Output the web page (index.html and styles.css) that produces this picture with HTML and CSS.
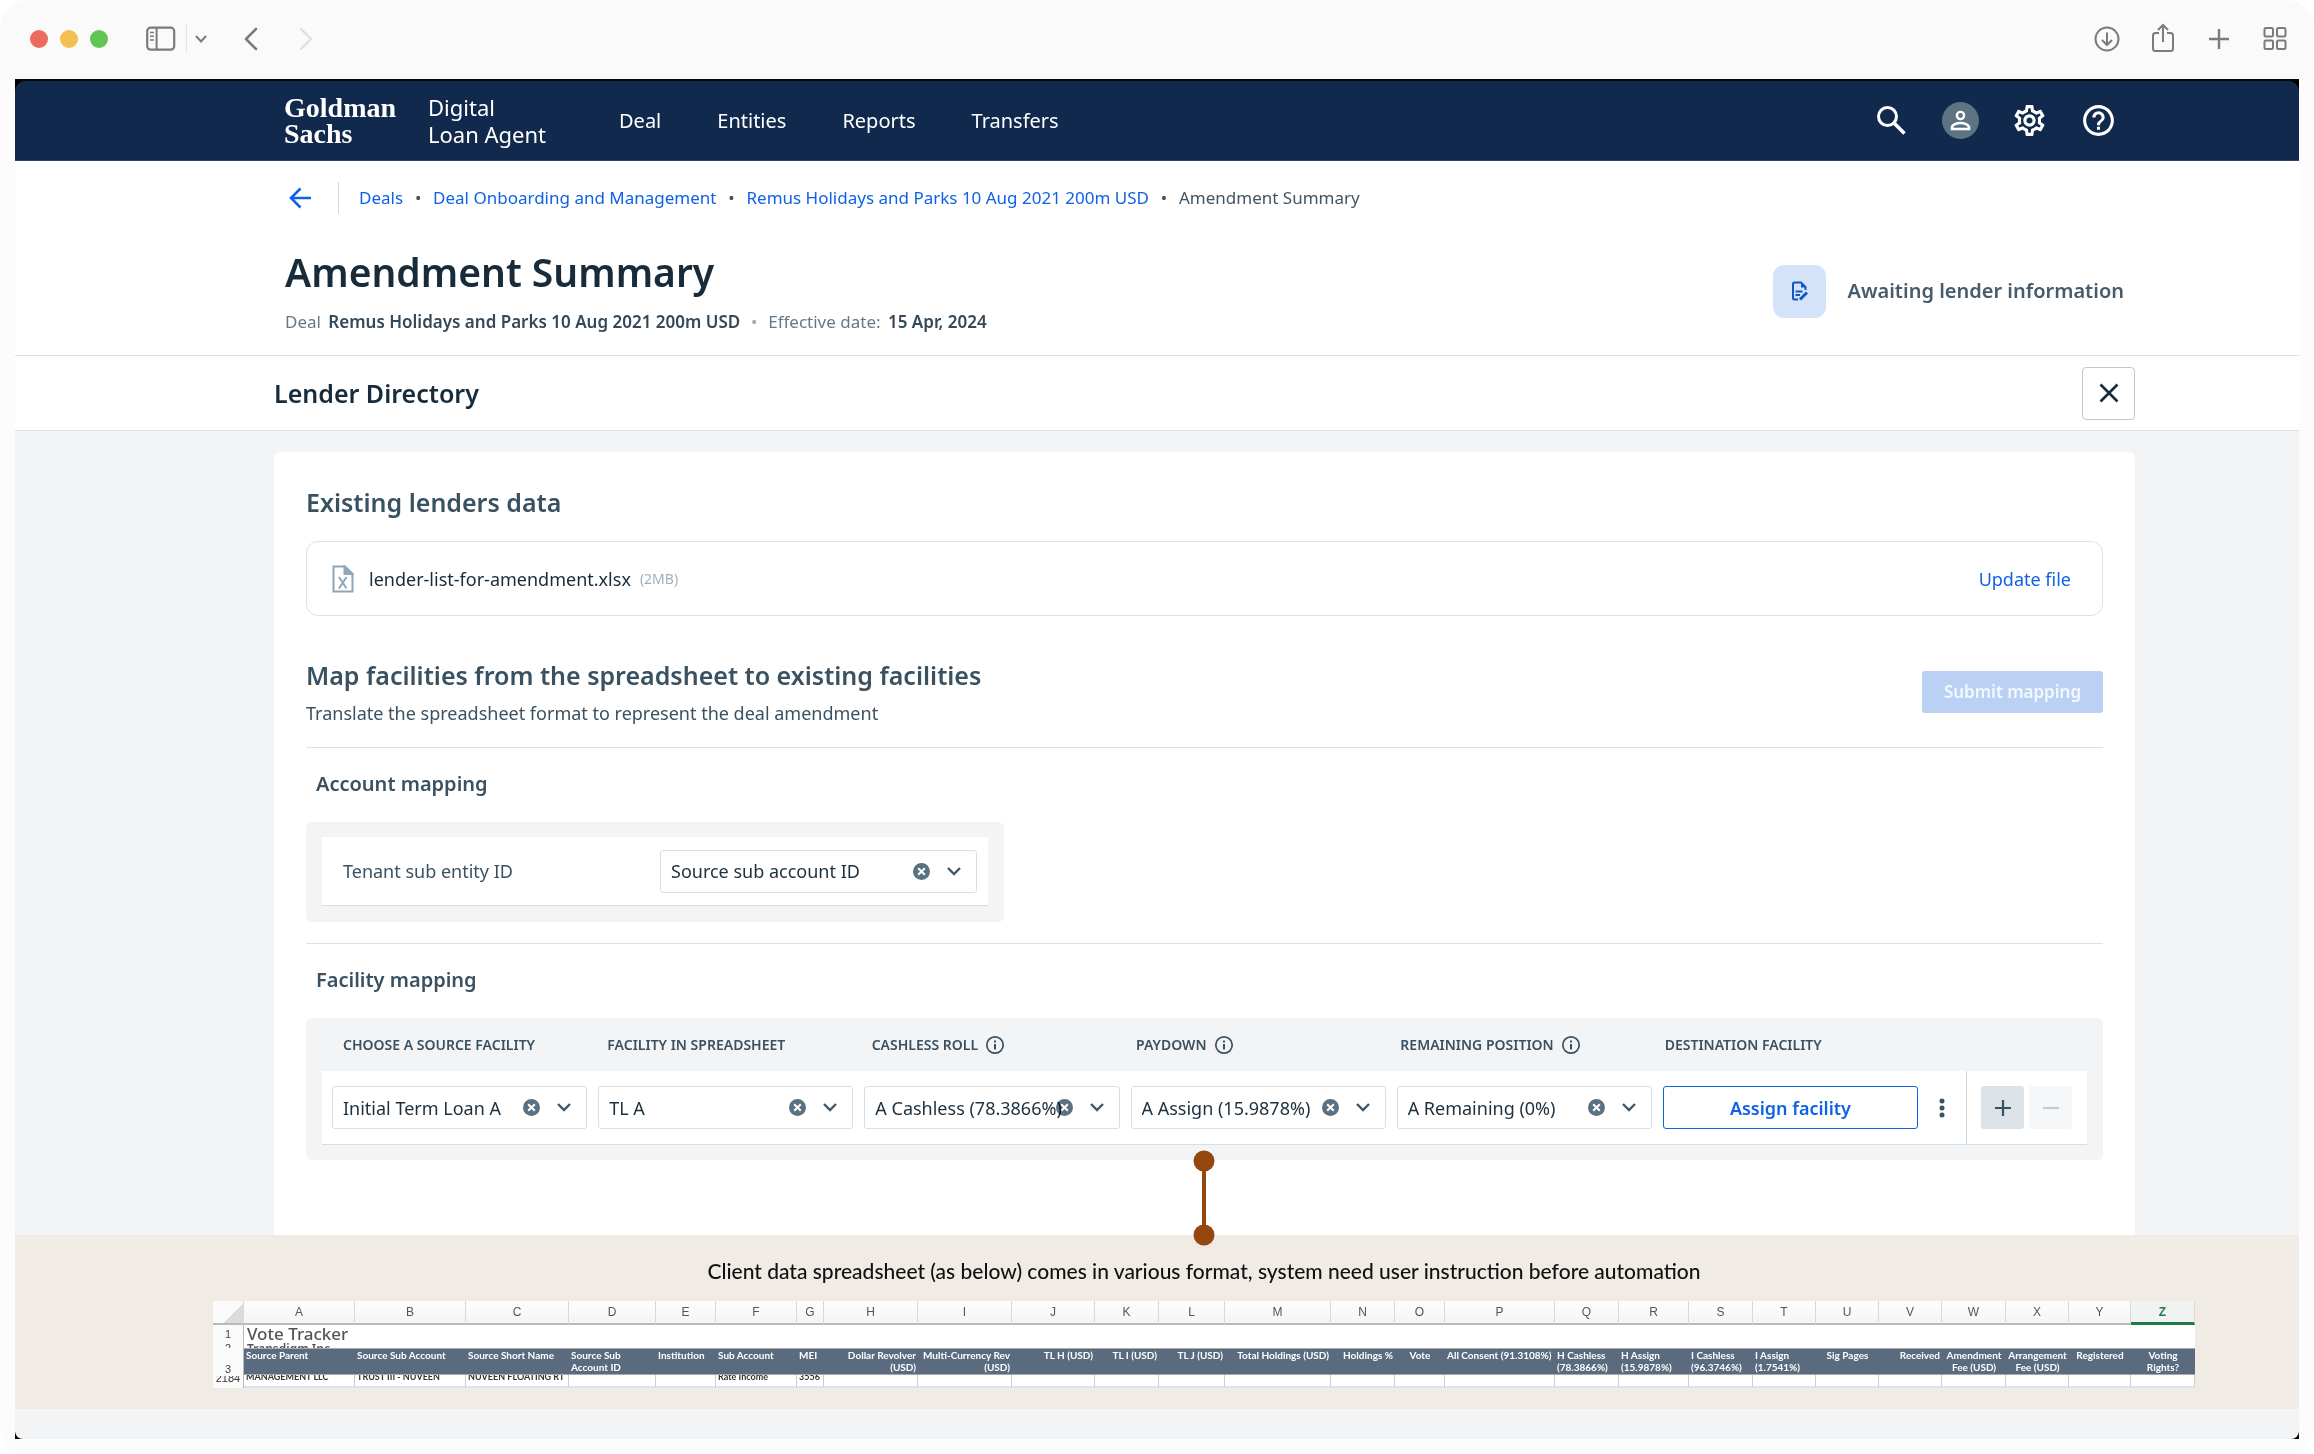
FILE: index.html
```html
<!DOCTYPE html>
<html lang="en">
<head>
<meta charset="utf-8">
<title>Amendment Summary</title>
<link rel="stylesheet" href="styles.css">
</head>
<body>
<svg class="sprite" aria-hidden="true">
  <symbol id="chevron" viewBox="0 0 16 16"><path d="M2 5l6 6 6-6" fill="none" stroke="currentColor" stroke-width="2.4"/></symbol>
  <symbol id="clear" viewBox="0 0 16 16"><circle cx="8" cy="8" r="8" fill="#5a7182"/><path d="M4.9 4.9l6.2 6.2M11.1 4.9l-6.2 6.2" stroke="#fff" stroke-width="2"/></symbol>
  <symbol id="info" viewBox="0 0 20 20"><circle cx="10" cy="10" r="8.2" fill="none" stroke="currentColor" stroke-width="1.7"/><path d="M10 9v5.4M10 5.4v2" stroke="currentColor" stroke-width="2"/></symbol>
</svg>
<div class="window">
  <header class="toolbar">
    <div class="lights"><span class="light red"></span><span class="light amber"></span><span class="light green"></span></div>
    <button class="tool sidebar" aria-label="Sidebar"><svg width="30" height="26" viewBox="0 0 30 26" fill="none" stroke="currentColor"><rect x="1.2" y="1.7" width="27" height="22" rx="3.5" stroke-width="2.2"/><path d="M10.6 2v21.500" stroke-width="2"/><path d="M4 6.500h4M4 10.200h4M4 13.900h4" stroke-width="1.500"/></svg></button>
    <span class="tool-line"></span>
    <button class="tool tool-more" aria-label="Sidebar options"><svg width="12" height="8" viewBox="0 0 12 8" fill="none" stroke="currentColor" stroke-width="2"><path d="M1 1l5 5.500L11 1"/></svg></button>
    <button class="tool tool-back" aria-label="Back"><svg width="14" height="24" viewBox="0 0 14 24" fill="none" stroke="currentColor" stroke-width="2.600" stroke-linecap="round" stroke-linejoin="round"><path d="M12 2L2 12l10 10"/></svg></button>
    <button class="tool tool-forward" aria-label="Forward"><svg width="14" height="24" viewBox="0 0 14 24" fill="none" stroke="currentColor" stroke-width="2.400" stroke-linecap="round" stroke-linejoin="round"><path d="M2 2l10 10L2 22"/></svg></button>
    <div class="tools-end">
      <button class="tool" aria-label="Downloads"><svg width="28" height="32" viewBox="0 0 28 32" fill="none" stroke="currentColor" stroke-width="2"><circle cx="14" cy="16" r="11.500"/><path d="M14 9.500v12M9 17l5 5 5-5"/></svg></button>
      <button class="tool" aria-label="Share"><svg width="28" height="32" viewBox="0 0 28 32" fill="none" stroke="currentColor" stroke-width="2"><path d="M10 10H6.500a2.500 2.500 0 0 0-2.500 2.500v13A2.500 2.500 0 0 0 6.500 28h15a2.500 2.500 0 0 0 2.500-2.500v-13A2.500 2.500 0 0 0 21.500 10H18M14 19V2.500M9 7l5-5 5 5"/></svg></button>
      <button class="tool" aria-label="New tab"><svg width="28" height="32" viewBox="0 0 28 32" fill="none" stroke="currentColor" stroke-width="2.400"><path d="M14 6v20M4 16h20"/></svg></button>
      <button class="tool" aria-label="Tab overview"><svg width="28" height="32" viewBox="0 0 28 32" fill="none" stroke="currentColor" stroke-width="2"><rect x="3.500" y="5" width="8.500" height="8.500" rx="1.500"/><rect x="16" y="5" width="8.500" height="8.500" rx="1.500"/><rect x="3.500" y="17.500" width="8.500" height="8.500" rx="1.500"/><rect x="16" y="17.500" width="8.500" height="8.500" rx="1.500"/></svg></button>
    </div>
  </header>

  <div class="page">
    <div class="nav">
      <a class="logo" href="#">Goldman<br>Sachs</a>
      <span class="product">Digital<br>Loan Agent</span>
      <nav class="menu"><a href="#">Deal</a><a href="#">Entities</a><a href="#">Reports</a><a href="#">Transfers</a></nav>
      <div class="nav-icons">
        <button class="tool" aria-label="Search"><svg width="37" height="37" viewBox="0 0 37 37" fill="none" stroke="#fff" stroke-width="3"><circle cx="14.500" cy="14.500" r="9"/><path d="M21 21l10.500 10.500" stroke-width="3.600"/></svg></button>
        <button class="tool" aria-label="Account"><svg width="37" height="37" viewBox="0 0 37 37"><circle cx="18.500" cy="18.500" r="18.500" fill="#5f7482"/><circle cx="18.500" cy="13.500" r="3.600" fill="none" stroke="#fff" stroke-width="2.400"/><path d="M10 27v-1.500c0-3 5-4.500 8.500-4.500s8.500 1.500 8.500 4.500V27z" fill="none" stroke="#fff" stroke-width="2.600"/></svg></button>
        <button class="tool" aria-label="Settings"><svg width="37" height="37" viewBox="0 0 24 24" fill="#fff"><path d="M19.430 12.980c.04-.32.07-.64.07-.98s-.03-.66-.07-.98l2.110-1.650c.19-.15.24-.42.12-.64l-2-3.460c-.09-.16-.26-.25-.44-.25-.06 0-.12.010-.17.030l-2.490 1c-.52-.4-1.080-.73-1.690-.98l-.38-2.650C14.460 2.180 14.250 2 14 2h-4c-.25 0-.46.18-.49.42l-.38 2.650c-.61.25-1.170.59-1.690.98l-2.490-1c-.06-.02-.12-.03-.18-.03-.17 0-.34.090-.43.250l-2 3.460c-.13.22-.07.49.12.64l2.110 1.650c-.04.32-.07.65-.07.98s.03.660.070.980l-2.110 1.650c-.19.15-.24.42-.12.64l2 3.460c.09.16.26.25.44.25.06 0 .12-.01.17-.03l2.490-1c.52.4 1.080.73 1.690.98l.38 2.650c.03.24.24.42.49.42h4c.25 0 .46-.18.49-.42l.38-2.650c.61-.25 1.170-.59 1.690-.98l2.490 1c.06.02.12.03.18.03.17 0 .34-.09.43-.25l2-3.460c.12-.22.07-.49-.12-.64l-2.110-1.650zm-1.980-1.710c.04.31.05.52.05.73 0 .21-.02.43-.05.73l-.14 1.130.89.7 1.080.84-.7 1.210-1.270-.51-1.040-.42-.9.68c-.43.32-.84.56-1.250.73l-1.060.43-.16 1.130-.2 1.350h-1.400l-.19-1.350-.16-1.130-1.060-.43c-.43-.18-.83-.41-1.230-.71l-.91-.7-1.060.43-1.270.51-.7-1.210 1.080-.84.89-.7-.14-1.130c-.03-.31-.05-.54-.05-.74s.02-.43.05-.73l.14-1.130-.89-.7-1.080-.84.7-1.210 1.270.51 1.040.42.9-.68c.43-.32.84-.56 1.250-.73l1.060-.43.16-1.130.2-1.350h1.390l.19 1.350.16 1.130 1.060.43c.43.18.83.41 1.230.71l.91.7 1.060-.43 1.270-.51.7 1.210-1.070.85-.89.7.14 1.130zM12 8c-2.210 0-4 1.790-4 4s1.790 4 4 4 4-1.790 4-4-1.790-4-4-4zm0 6c-1.100 0-2-.9-2-2s.9-2 2-2 2 .9 2 2-.9 2-2 2z"/></svg></button>
        <button class="tool" aria-label="Help"><svg width="37" height="37" viewBox="0 0 24 24" fill="#fff"><path d="M11 18h2v-2h-2v2zm1-16C6.480 2 2 6.480 2 12s4.480 10 10 10 10-4.480 10-10S17.520 2 12 2zm0 18c-4.410 0-8-3.590-8-8s3.590-8 8-8 8 3.590 8 8-3.590 8-8 8zm0-14c-2.210 0-4 1.790-4 4h2c0-1.100.9-2 2-2s2 .9 2 2c0 2-3 1.750-3 5h2c0-2.250 3-2.500 3-5 0-2.210-1.790-4-4-4z"/></svg></button>
      </div>
    </div>

    <section class="summary">
      <div class="crumbs">
        <a class="back" href="#" aria-label="Back"><svg width="22" height="22" viewBox="0 0 22 22" fill="none" stroke="currentColor" stroke-width="2.600"><path d="M22 11H2M11.500 1.500L2 11l9.500 9.500"/></svg></a>
        <a href="#">Deals</a><i>•</i><a href="#">Deal Onboarding and Management</a><i>•</i><a href="#">Remus Holidays and Parks 10 Aug 2021 200m USD</a><i>•</i><span>Amendment Summary</span>
      </div>
      <div class="title-row">
        <div>
          <h1>Amendment Summary</h1>
          <p class="facts">Deal <b>Remus Holidays and Parks 10 Aug 2021 200m USD</b><i>•</i>Effective date: <b>15 Apr, 2024</b></p>
        </div>
        <div class="status">
          <span class="status-icon"><svg width="18" height="20" viewBox="0 0 18 20" fill="none" stroke="#1556c0" stroke-width="2"><path d="M7 18.500H3.500a1.500 1.500 0 0 1-1.500-1.500V3a1.500 1.500 0 0 1 1.500-1.500H10L14.500 6v3"/><path d="M10 1v5.500h5z" fill="#1556c0" stroke="none"/><path d="M4.500 10.500h7M4.500 14h4.500"/><path d="M9 18.500l7-7" stroke-width="3"/></svg></span>
          Awaiting lender information
        </div>
      </div>
    </section>

    <section class="directory-bar">
      <h2>Lender Directory</h2>
      <button class="close" aria-label="Close"><svg width="20" height="20" viewBox="0 0 20 20" stroke="currentColor" stroke-width="2.600"><path d="M1.500 1.500l17 17M18.500 1.500l-17 17"/></svg></button>
    </section>

    <main class="body">
      <div class="card">
        <h2 class="heading">Existing lenders data</h2>
        <div class="file">
          <svg width="22" height="28" viewBox="0 0 22 28" fill="none" stroke="#8fa6b8" stroke-width="2"><path d="M1.500 1.500H13L20.500 9v17.500h-19z"/><path d="M12.500 1.500V9h8z" fill="#8fa6b8"/><path d="M7 12l7.500 11.500M14.500 12L7 23.500"/></svg>
          <span class="file-name">lender-list-for-amendment.xlsx</span><small>(2MB)</small>
          <a href="#">Update file</a>
        </div>

        <div class="map-head">
          <div>
            <h2 class="heading">Map facilities from the spreadsheet to existing facilities</h2>
            <p>Translate the spreadsheet format to represent the deal amendment</p>
          </div>
          <button class="submit" disabled>Submit mapping</button>
        </div>

        <section class="mapping">
          <h3>Account mapping</h3>
          <div class="panel account">
            <div class="account-row">
              <label for="tenant">Tenant sub entity ID</label>
              <div class="pick"><select id="tenant"><option>Source sub account ID</option></select><button class="clear" aria-label="Clear"><svg width="17" height="17"><use href="#clear"/></svg></button><svg class="caret" width="16" height="16"><use href="#chevron"/></svg></div>
            </div>
          </div>
        </section>

        <section class="mapping">
          <h3>Facility mapping</h3>
          <div class="panel facility">
            <div class="columns">
              <label for="f1">CHOOSE A SOURCE FACILITY</label>
              <label for="f2">FACILITY IN SPREADSHEET</label>
              <label for="f3">CASHLESS ROLL <svg width="20" height="20"><use href="#info"/></svg></label>
              <label for="f4">PAYDOWN <svg width="20" height="20"><use href="#info"/></svg></label>
              <label for="f5">REMAINING POSITION <svg width="20" height="20"><use href="#info"/></svg></label>
              <label for="f6">DESTINATION FACILITY</label>
            </div>
            <div class="facility-row">
              <div class="fields">
                <div class="pick"><select id="f1"><option>Initial Term Loan A</option></select><button class="clear" aria-label="Clear"><svg width="17" height="17"><use href="#clear"/></svg></button><svg class="caret" width="16" height="16"><use href="#chevron"/></svg></div>
                <div class="pick"><select id="f2"><option>TL A</option></select><button class="clear" aria-label="Clear"><svg width="17" height="17"><use href="#clear"/></svg></button><svg class="caret" width="16" height="16"><use href="#chevron"/></svg></div>
                <div class="pick"><select id="f3"><option>A Cashless (78.3866%)</option></select><button class="clear" aria-label="Clear"><svg width="17" height="17"><use href="#clear"/></svg></button><svg class="caret" width="16" height="16"><use href="#chevron"/></svg></div>
                <div class="pick"><select id="f4"><option>A Assign (15.9878%)</option></select><button class="clear" aria-label="Clear"><svg width="17" height="17"><use href="#clear"/></svg></button><svg class="caret" width="16" height="16"><use href="#chevron"/></svg></div>
                <div class="pick"><select id="f5"><option>A Remaining (0%)</option></select><button class="clear" aria-label="Clear"><svg width="17" height="17"><use href="#clear"/></svg></button><svg class="caret" width="16" height="16"><use href="#chevron"/></svg></div>
                <button class="assign" id="f6">Assign facility</button>
              </div>
              <button class="kebab" aria-label="More"><svg width="6" height="20" viewBox="0 0 6 20" fill="currentColor"><circle cx="3" cy="3" r="2.500"/><circle cx="3" cy="10" r="2.500"/><circle cx="3" cy="17" r="2.500"/></svg></button>
              <div class="row-actions">
                <button class="square" aria-label="Add row"><svg width="16" height="16" viewBox="0 0 16 16" stroke="currentColor" stroke-width="2.200"><path d="M8 0v16M0 8h16"/></svg></button>
                <button class="square off" aria-label="Remove row" disabled><svg width="16" height="16" viewBox="0 0 16 16" stroke="currentColor" stroke-width="2.200"><path d="M0 8h16"/></svg></button>
              </div>
            </div>
          </div>
        </section>
      </div>

      <section class="band">
        <svg class="connector" width="22" height="96" viewBox="0 0 22 96" fill="#94470f"><circle cx="11" cy="11" r="10.500"/><path d="M9 11h4v74H9z"/><circle cx="11" cy="85" r="10.500"/></svg>
        <p>Client data spreadsheet (as below) comes in various format, system need user instruction before automation</p>
        <table class="sheet">
          <colgroup><col width="31"><col width="111"><col width="111"><col width="103"><col width="87"><col width="60"><col width="81"><col width="27"><col width="94"><col width="94"><col width="83"><col width="64"><col width="66"><col width="106"><col width="64"><col width="50"><col width="110"><col width="64"><col width="70"><col width="64"><col width="63"><col width="63"><col width="63"><col width="64"><col width="63"><col width="62"><col width="64"></colgroup>
          <thead><tr class="letters"><th class="corner"></th><th>A</th><th>B</th><th>C</th><th>D</th><th>E</th><th>F</th><th>G</th><th>H</th><th>I</th><th>J</th><th>K</th><th>L</th><th>M</th><th>N</th><th>O</th><th>P</th><th>Q</th><th>R</th><th>S</th><th>T</th><th>U</th><th>V</th><th>W</th><th>X</th><th>Y</th><th class="active">Z</th></tr></thead>
          <tbody>
            <tr class="r1"><th><div>1</div></th><td colspan="26"><div>Vote Tracker</div></td></tr>
            <tr class="r2"><th><div>2</div></th><td colspan="26"><div>Transdigm Inc.</div></td></tr>
            <tr class="r3"><th><div>3</div></th><td>Source Parent</td><td>Source Sub Account</td><td>Source Short Name</td><td>Source Sub<br>Account ID</td><td>Institution</td><td>Sub Account</td><td>MEI</td><td class="end">Dollar Revolver<br>(USD)</td><td class="end">Multi-Currency Rev<br>(USD)</td><td class="end">TL H (USD)</td><td class="end">TL I (USD)</td><td class="end">TL J (USD)</td><td class="end">Total Holdings (USD)</td><td class="end">Holdings %</td><td class="mid">Vote</td><td>All Consent (91.3108%)</td><td>H Cashless<br>(78.3866%)</td><td>H Assign<br>(15.9878%)</td><td>I Cashless<br>(96.3746%)</td><td>I Assign<br>(1.7541%)</td><td class="mid">Sig Pages</td><td class="end">Received</td><td class="mid">Amendment<br>Fee (USD)</td><td class="mid">Arrangement<br>Fee (USD)</td><td class="mid">Registered</td><td class="mid">Voting<br>Rights?</td></tr>
            <tr class="r4"><th><div>2184</div></th><td><div>MANAGEMENT LLC</div></td><td><div>TRUST III - NUVEEN</div></td><td><div>NUVEEN FLOATING RT</div></td><td></td><td></td><td><div>Rate Income</div></td><td><div>3556</div></td><td></td><td></td><td></td><td></td><td></td><td></td><td></td><td></td><td></td><td></td><td></td><td></td><td></td><td></td><td></td><td></td><td></td><td></td><td></td></tr>
          </tbody>
        </table>
      </section>
    </main>
  </div>
</div>
</body>
</html>
```
FILE: styles.css
```css
* { box-sizing: border-box; }
body { margin: 0; background: #fff; color: #172b3a; font-family: "Noto Sans", "Open Sans", sans-serif; font-size: 18px; line-height: 24px; }
h1, h2, h3, p { margin: 0; }
a { color: #0f62e6; text-decoration: none; }
i { font-style: normal; }
button, select { font: inherit; color: inherit; margin: 0; }
svg { display: block; flex: none; }
.sprite { display: none; }

.window { min-height: 100vh; padding-bottom: 16px; background: #fcfcfc; border-radius: 28px; }
.toolbar { display: flex; align-items: center; height: 79px; padding: 0 25px 2px 30px; background: #fafafa; border-radius: 28px 28px 0 0; color: #7b7b7b; }
.tool { display: flex; padding: 0; border: 0; background: none; }
.lights { display: flex; gap: 12px; margin-right: 38px; }
.light { width: 18px; height: 18px; border-radius: 50%; }
.red { background: #ed6a5e; }
.amber { background: #f4bf4f; }
.green { background: #61c554; }
.tool-line { width: 1px; height: 27px; margin: 0 8px 0 10px; background: #e3e3e3; }
.tool-back { margin-left: 37px; }
.tool-forward { margin-left: 41px; color: #dfdfdf; }
.tools-end { display: flex; gap: 28px; margin-left: auto; }

.page { margin: 0 15px; border-top: 2px solid #050708; background: #000; }
.nav { display: flex; align-items: center; height: 80px; padding: 0 182px 0 269px; background: #11294d; border-bottom: 1px solid #2d4569; border-radius: 10px 10px 0 0; color: #fff; font-size: 20px; }
.nav a { color: #fff; }
.logo { width: 144px; font: bold 28px/26px "Liberation Serif", serif; }
.product { width: 191px; font-size: 22px; line-height: 27px; }
.menu { display: flex; gap: 56px; }
.nav-icons { display: flex; gap: 32px; margin-left: auto; }

.summary { padding: 21px 175px 21px 270px; background: #fff; }
.crumbs { display: flex; align-items: center; height: 32px; color: #3f5565; font-size: 17px; }
.crumbs i { width: 30px; text-align: center; }
.back { display: flex; align-items: center; height: 32px; padding: 0 27px 0 4px; margin-right: 20px; border-right: 1px solid #d5dde3; }
.title-row { display: flex; align-items: center; justify-content: space-between; margin-top: 34px; }
h1 { color: #172b3a; font-size: 39px; line-height: 48px; font-weight: 600; }
.facts { margin-top: 14px; color: #64798a; font-size: 17px; }
.facts b { margin-left: 3px; color: #34495a; font-weight: 600; }
.facts i { display: inline-block; width: 28px; text-align: center; color: #9aabb8; }
.status { display: flex; align-items: center; gap: 21px; color: #465b6b; font-size: 20px; font-weight: 600; }
.status-icon { display: grid; place-items: center; width: 53px; height: 53px; border-radius: 11px; background: #d5e3fa; }

.directory-bar { display: flex; align-items: center; justify-content: space-between; height: 76px; padding: 0 164px 0 259px; background: #fff; border: solid #dbe2e7; border-width: 1px 0; }
.directory-bar h2 { font-size: 25px; font-weight: 600; }
.close { display: grid; place-items: center; width: 53px; height: 53px; padding: 0; border: 1px solid #bccad5; border-radius: 4px; background: #fff; }

.body { padding: 21px 0 30px; background: #f3f4f6; border-radius: 0 0 8px 8px; }
.card { margin: 0 164px 0 259px; padding: 33px 32px 75px; background: #fff; border-radius: 6px 6px 0 0; color: #3a5162; }
.heading { font-size: 25px; line-height: 34px; font-weight: 600; }
.file { display: flex; align-items: center; height: 75px; margin-top: 22px; padding: 0 31px 0 25px; border: 1px solid #dbe2e8; border-radius: 12px; }
.file-name { margin: 0 9px 0 15px; color: #172b3a; }
.file small { color: #9fb1c0; font-size: 14px; }
.file a { margin-left: auto; }
.map-head { display: flex; align-items: center; justify-content: space-between; margin-top: 42px; }
.map-head p { margin-top: 9px; }
.submit { width: 181px; height: 42px; padding: 0; border: 0; border-radius: 3px; background: #bad1f4; color: #f4f8fe; font-size: 17px; font-weight: 600; }
.mapping { margin-top: 22px; padding-top: 22px; border-top: 1px solid #dbe2e7; }
.mapping + .mapping { margin-top: 21px; }
h3 { padding-left: 10px; font-size: 20px; line-height: 28px; font-weight: 600; }
.panel { margin-top: 24px; border-radius: 6px; background: #f3f4f6; }
.account { max-width: 698px; padding: 15px 16px 16px; }
.account-row { display: grid; grid-template-columns: 1fr 317px; align-items: center; height: 69px; padding: 0 11px 0 21px; background: #fff; border-bottom: 1px solid #d5dee4; }
.pick { position: relative; }
.pick select { display: block; width: 100%; height: 43px; padding: 0 10px; border: 1px solid #d8e0e6; border-radius: 3px; background: #fff; appearance: none; color: #1c303f; }
.clear { position: absolute; top: 13px; right: 47px; padding: 0; border: 0; background: none; mix-blend-mode: multiply; }
.caret { position: absolute; top: 13px; right: 15px; pointer-events: none; color: #40566a; }

.facility { padding-bottom: 15px; }
.columns { display: grid; grid-template-columns: repeat(6, 1fr); align-items: center; height: 53px; padding: 0 174px 0 37px; font-size: 14px; font-weight: 600; }
.columns label { display: flex; align-items: center; gap: 7px; white-space: nowrap; }
.facility-row { display: flex; align-items: center; height: 74px; margin: 0 16px; padding-left: 10px; background: #fff; border-bottom: 1px solid #d5dee4; }
.fields { display: grid; flex: 1; grid-template-columns: repeat(6, minmax(0, 1fr)); gap: 11px; }
.assign { padding: 0; border: 1px solid #0f62e6; border-radius: 3px; background: #fff; color: #0f62e6; font-weight: 600; }
.kebab { display: grid; place-items: center; width: 48px; height: 42px; padding: 0; border: 0; background: none; }
.row-actions { display: flex; align-items: center; gap: 5px; height: 73px; padding: 0 15px 0 14px; border-left: 1px solid #ccd7de; }
.square { display: grid; place-items: center; width: 43px; height: 43px; padding: 0; border: 0; border-radius: 3px; background: #dbe2e8; }
.square.off { background: #f6f7f8; color: #c6cacd; }

.band { position: relative; padding: 21px 104px 21px 198px; background: #f0ebe5; color: #111; }
.band p { text-align: center; font: 500 21px/30px Lato, sans-serif; }
.connector { position: absolute; top: -85px; left: 50%; margin-left: 36px; }
.sheet { width: 100%; margin-top: 15px; table-layout: fixed; border-collapse: separate; border-spacing: 0; background: #fff; font: 700 10px/12px Lato, sans-serif; }
.sheet th, .sheet td { padding: 0; overflow: hidden; white-space: nowrap; }
.sheet tbody th { background: #fafafa; border-right: 1px solid #bbb; color: #444; font: 11px/11px "Liberation Sans", sans-serif; }
.sheet .letters th { height: 24px; background: linear-gradient(#fdfdfd, #f5f5f5); border-right: 1px solid #d9d9d9; border-bottom: 2px solid #b9b9b9; color: #555; font: 12px/20px "Liberation Sans", sans-serif; }
.sheet .letters .corner { background: linear-gradient(135deg, #fafafa 62%, #dcdcdc 62%); }
.sheet .letters .active { background: #f1f3f2; border-bottom: 3px solid #1f7a45; color: #1f7a45; font-weight: bold; }
.sheet tr div { overflow: hidden; }
.r1 div { height: 18px; line-height: 18px; }
.sheet .r1 td { padding-left: 3px; color: #555; font: 500 17px/18px "Noto Sans", sans-serif; }
.r2 div { height: 5px; line-height: 11px; }
.sheet .r2 td { padding-left: 3px; color: #555; font: 600 12px/12px "Noto Sans", sans-serif; }
.r3 { height: 27px; background: #5a6b7f; color: #fff; vertical-align: top; }
.sheet .r3 th { vertical-align: bottom; }
.sheet .r3 td { padding: 0 2px; border: 0 solid #aaa; border-width: 1px 0; }
.end { text-align: right; }
.mid { text-align: center; }
.r4 div { display: flex; align-items: flex-end; height: 11px; padding-bottom: 4px; color: #333; line-height: 10px; }
.r4 th div { justify-content: center; }
.sheet .r4 td { height: 13px; padding-left: 2px; border-right: 1px solid #ccc; border-bottom: 2px solid #d7e6ee; vertical-align: top; font-size: 9px; }
```
